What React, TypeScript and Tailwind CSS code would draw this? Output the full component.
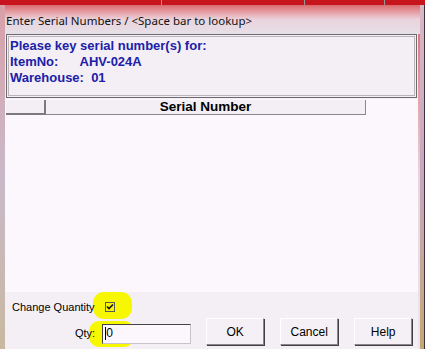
import React from 'react';

const blue = 'text-[#2020a8]';

const WinButton: React.FC<{label: string}> = ({label}) => (
    <button className="w-[58px] h-[27px] bg-[#f4f0f6] border border-t-white border-l-white border-r-[#8a868c] border-b-[#8a868c] shadow-[1px_1px_0_#404040] text-[12px] text-black font-['Liberation_Sans',sans-serif]">
        {label}
    </button>
);

const App: React.FC = () => {
    return (
        <div className="relative w-[425px] h-[349px] overflow-hidden bg-[#c8141c] font-['Liberation_Sans',sans-serif]">
            {/* parent window strip behind */}
            <div className="flex h-[5px]">
                <div className="w-[162px] border-r border-[#9a9a9a]"/>
                <div className="w-[143px] border-r border-[#9a9a9a]"/>
                <div className="w-[80px] border-r border-[#9a9a9a]"/>
            </div>
            <div className="flex h-[344px]">
                {/* left frame */}
                <div className="w-[5px] bg-gradient-to-b from-[#d8a0a8] via-[#c9b9c9] to-[#c8b8a0]"/>
                <div className="flex flex-col w-[415px] rounded-tr-[7px] bg-gradient-to-b from-[#d9626a] via-[#e8d6de] to-[#ece6ee]">
                    <div className="h-[29px] flex items-center pl-[1px] pt-[3px] text-[11.5px] text-[#111] font-['Noto_Sans',sans-serif] bg-gradient-to-b from-[#d96a70] via-[#ead3dc] to-[#e6e0e8]">
                        Enter Serial Numbers / &lt;Space bar to lookup&gt;
                    </div>
                    <div className="flex flex-col flex-1 bg-[#f3eff5] mr-[2px]">
                        <div className="h-[64px] mx-[1px] border border-[#6c6a6e] p-[1px]">
                            <div className={`h-full border border-[#b8b4ba] bg-[#f3eff5] px-[1px] pt-[1px] text-[13px] leading-[16px] font-bold ${blue}`}>
                                <div>Please key serial number(s) for:</div>
                                <div className="whitespace-pre">ItemNo:      AHV-024A</div>
                                <div className="whitespace-pre">Warehouse:  01</div>
                            </div>
                        </div>
                        <div className="h-[193px] mt-[1px] bg-[#fcf7fc]">
                            <div className="flex h-[15px] mt-[1px] ml-[1px]">
                                <div className="w-[40px] bg-[#f3eff5] border-r-2 border-b-2 border-[#7c7a7e]"/>
                                <div className="w-[320px] bg-[#f3eff5] border-r border-b border-[#8a888c] flex items-center justify-center text-[13.5px] font-bold text-black">
                                    Serial Number
                                </div>
                            </div>
                        </div>
                        <div className="relative flex-1">
                            {/* highlighter marks */}
                            <div className="absolute left-[88px] top-[0px] w-[39px] h-[27px] rounded-[11px] bg-[#f7f700]"/>
                            <div className="absolute left-[84px] top-[29px] w-[45px] h-[26px] rounded-[10px] bg-[#f7f700]"/>
                            <div className="relative flex items-center h-[28px] pl-[7px] pt-[2px] text-[11px] text-black">
                                <span>Change Quantity</span>
                                <span className="ml-[10px] w-[10px] h-[10px] border border-[#595959] flex items-center justify-center">
                                    <svg width="8" height="8" viewBox="0 0 8 8">
                                        <path d="M1 3.5 L3 5.5 L7 1.5" stroke="#111" strokeWidth="1.6" fill="none"/>
                                    </svg>
                                </span>
                            </div>
                            <div className="relative flex items-center pt-[2px]">
                                <span className="ml-[70px] text-[11px] text-black">Qty:</span>
                                <div className="ml-[7px] w-[89px] h-[20px] bg-[#fcf7fc] border border-t-[#444] border-l-[#444] border-r-[#c8c4ca] border-b-[#c8c4ca] flex items-center pl-[2px] text-[12px] text-black">
                                    <span className="border-l border-black leading-[13px]">0</span>
                                </div>
                                <div className="flex gap-[16px] ml-[15px] -mt-[4px]">
                                    <WinButton label="OK"/>
                                    <WinButton label="Cancel"/>
                                    <WinButton label="Help"/>
                                </div>
                            </div>
                        </div>
                    </div>
                </div>
                {/* right frame */}
                <div className="w-[5px] bg-gradient-to-b from-[#d8b8c4] via-[#c7a6be] to-[#c4a870] border-r border-[#3c3040]"/>
            </div>
        </div>
    );
};

export default App;
